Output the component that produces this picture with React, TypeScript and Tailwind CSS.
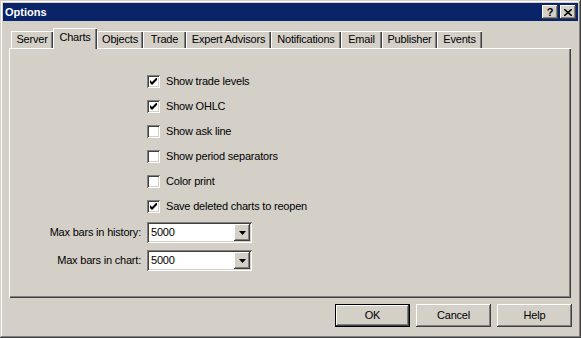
const FONT = "font-['Liberation_Sans',Arial,sans-serif]";

const tabs = [
    { label: "Server", w: "w-[42px]" },
    { label: "Charts", w: "w-[44px]", active: true },
    { label: "Objects", w: "w-[46px]" },
    { label: "Trade", w: "w-[43px]" },
    { label: "Expert Advisors", w: "w-[85px]" },
    { label: "Notifications", w: "w-[70px]" },
    { label: "Email", w: "w-[41px]" },
    { label: "Publisher", w: "w-[55px]" },
    { label: "Events", w: "w-[45px]" },
];

const options = [
    { label: "Show trade levels", checked: true },
    { label: "Show OHLC", checked: true },
    { label: "Show ask line", checked: false },
    { label: "Show period separators", checked: false },
    { label: "Color print", checked: false },
    { label: "Save deleted charts to reopen", checked: true },
];

// raised 3d edge, classic windows look
const raised =
    "shadow-[inset_-1px_-1px_#404040,inset_1px_1px_#ffffff,inset_-2px_-2px_#808080,inset_2px_2px_#d4d0c8]";
const sunken =
    "shadow-[inset_1px_1px_#808080,inset_-1px_-1px_#ffffff,inset_2px_2px_#404040,inset_-2px_-2px_#d4d0c8]";

function CheckBox({ checked }: { checked: boolean }) {
    return (
        <div className={`w-[13px] h-[13px] bg-white flex items-center justify-center ${sunken}`}>
            {checked && (
                <svg width="7" height="7" viewBox="0 0 7 7">
                    <path d="M0 2 L2 4 L7 -1 L7 2 L2 7 L0 5 Z" fill="#000" />
                </svg>
            )}
        </div>
    );
}

function Combo({ value }: { value: string }) {
    return (
        <div className={`w-[105px] h-[21px] bg-white flex items-center p-[2px] ${sunken}`}>
            <span className="flex-1 pl-[2px] text-[11px] leading-none text-black">{value}</span>
            <div className={`w-[16px] h-[17px] bg-[#d4d0c8] flex items-center justify-center ${raised}`}>
                <svg width="7" height="4" viewBox="0 0 7 4">
                    <path d="M0 0 H7 L3.5 4 Z" fill="#000" />
                </svg>
            </div>
        </div>
    );
}

function Button({ label, isDefault }: { label: string; isDefault?: boolean }) {
    return (
        <div
            className={`w-[75px] h-[23px] bg-[#d4d0c8] flex items-center justify-center text-[11px] text-black ${
                isDefault
                    ? "shadow-[inset_0_0_0_1px_#000,inset_-2px_-2px_#404040,inset_2px_2px_#ffffff,inset_-3px_-3px_#808080]"
                    : raised
            }`}
        >
            {label}
        </div>
    );
}

export default function App() {
    return (
        <div
            className={`w-[581px] h-[338px] bg-[#d4d0c8] p-[3px] flex flex-col tracking-[-0.2px] ${FONT} shadow-[inset_-1px_-1px_#404040,inset_1px_1px_#d4d0c8,inset_-2px_-2px_#808080,inset_2px_2px_#ffffff]`}
        >
            {/* title bar */}
            <div className="h-[18px] bg-[#0a246a] flex items-center pl-[2px] pr-[2px]">
                <span className="flex-1 text-white font-bold text-[11px] leading-none tracking-normal">Options</span>
                <div className={`w-[16px] h-[14px] bg-[#d4d0c8] flex items-center justify-center text-[11px] font-bold leading-none text-black ${raised}`}>
                    ?
                </div>
                <div className={`ml-[2px] w-[16px] h-[14px] bg-[#d4d0c8] flex items-center justify-center ${raised}`}>
                    <svg width="8" height="7" viewBox="0 0 8 7">
                        <path d="M0 0 L8 7 M8 0 L0 7" stroke="#000" strokeWidth="1.6" />
                    </svg>
                </div>
            </div>

            {/* tabs */}
            <div className="mt-[8px] ml-[8px] h-[19px] flex items-end">
                {tabs.map(t => (
                    <div
                        key={t.label}
                        className={`${t.w} flex items-center justify-center text-[11px] text-black bg-[#d4d0c8] ${
                            t.active
                                ? "h-[21px] -mb-[1px] relative z-10 pb-[3px] shadow-[inset_1px_1px_#ffffff,inset_-1px_0_#404040,inset_-2px_0_#808080]"
                                : "h-[17px] shadow-[inset_1px_1px_#ffffff,inset_-1px_0_#404040,inset_-2px_0_#808080]"
                        }`}
                    >
                        {t.label}
                    </div>
                ))}
            </div>

            {/* panel */}
            <div className="ml-[6px] mr-[7px] h-[250px] flex flex-col pt-[21px] shadow-[inset_1px_1px_#ffffff,inset_-1px_-1px_#404040,inset_-2px_-2px_#808080]">
                {options.map(o => (
                    <div key={o.label} className="h-[25px] flex items-center">
                        <div className="w-[138px]" />
                        <CheckBox checked={o.checked} />
                        <span className="ml-[6px] text-[11px] text-black">{o.label}</span>
                    </div>
                ))}
                <div className="mt-[3px] flex items-center">
                    <span className="w-[132px] text-right text-[11px] text-black">Max bars in history:</span>
                    <div className="ml-[6px]">
                        <Combo value="5000" />
                    </div>
                </div>
                <div className="mt-[7px] flex items-center">
                    <span className="w-[132px] text-right text-[11px] text-black">Max bars in chart:</span>
                    <div className="ml-[6px]">
                        <Combo value="5000" />
                    </div>
                </div>
            </div>

            {/* buttons */}
            <div className="mt-[6px] mr-[6px] flex justify-end gap-[6px]">
                <Button label="OK" isDefault />
                <Button label="Cancel" />
                <Button label="Help" />
            </div>
        </div>
    );
}
